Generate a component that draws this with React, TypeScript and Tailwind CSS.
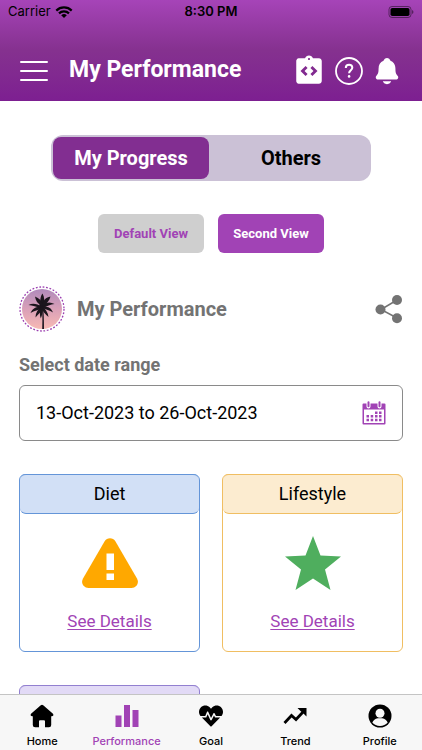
import { useState } from 'react';
import { FaHeartbeat } from 'react-icons/fa';
import { IoNotifications } from 'react-icons/io5';
import { MdIntegrationInstructions } from 'react-icons/md';

function StatusBar() {
  return (
    <div className="grid grid-cols-3 items-center h-6 px-2 font-[Inter,sans-serif] text-[13px] text-black">
      <div className="flex items-center gap-1">
        <span>Carrier</span>
        <svg className="w-[18px] h-3" viewBox="0 0 18 12" fill="none" stroke="currentColor" strokeWidth="2.2">
          <path d="M1.3 4.6a11 11 0 0 1 15.4 0" />
          <path d="M4 7.4a7.2 7.2 0 0 1 10 0" />
          <path d="M9 12 6.2 9.3a4 4 0 0 1 5.6 0z" fill="currentColor" stroke="none" />
        </svg>
      </div>
      <span className="text-center font-semibold">8:30 PM</span>
      <svg className="justify-self-end w-7 h-3" viewBox="0 0 28 12">
        <rect x="3" y="0.5" width="22" height="11" rx="3" fill="none" stroke="#000" strokeOpacity="0.45" />
        <rect x="4.5" y="2" width="19" height="8" rx="1.8" />
        <path d="M26 4v4q1.5-.6 1.5-2T26 4z" fillOpacity="0.45" />
      </svg>
    </div>
  );
}

function Header() {
  return (
    <header className="shrink-0 bg-linear-to-b from-[#a644b8] via-[#85318f] to-[#7d1f91]">
      <StatusBar />
      <div className="flex items-center h-[77px] px-5 pt-4 text-white">
        <button aria-label="Menu">
          <svg className="w-7 h-6" viewBox="0 0 28 24" fill="none" stroke="currentColor" strokeWidth="2" strokeLinecap="round">
            <path d="M1 3h26M1 12h26M1 21h26" />
          </svg>
        </button>
        <h1 className="ml-[21px] text-[23px] font-bold">My Performance</h1>
        <div className="flex items-center gap-[9px] ml-auto">
          <button aria-label="Instructions">
            <MdIntegrationInstructions className="w-[34px] h-[34px]" />
          </button>
          <button aria-label="Help">
            <svg className="w-7 h-7" viewBox="0 0 28 28" fill="none" stroke="currentColor" strokeWidth="2">
              <circle cx="14" cy="14" r="13" strokeWidth="1.8" />
              <path d="M10.800 11c0-2 1.400-3.200 3.300-3.200s3.200 1.200 3.200 3c0 2.300-3.200 2.700-3.200 5.400" />
              <circle cx="14.100" cy="19.400" r="1.300" fill="currentColor" stroke="none" />
            </svg>
          </button>
          <button aria-label="Notifications">
            <IoNotifications className="w-[30px] h-[30px]" />
          </button>
        </div>
      </div>
    </header>
  );
}

function Avatar() {
  return (
    <svg className="w-[46px] h-[46px]" viewBox="0 0 46 46">
      <defs>
        <linearGradient id="sky" x1="0" y1="0" x2="0" y2="1">
          <stop offset="0" stopColor="#b08abb" />
          <stop offset="0.500" stopColor="#d9a0b8" />
          <stop offset="1" stopColor="#f7b9b4" />
        </linearGradient>
      </defs>
      <circle cx="23" cy="23" r="22" fill="none" stroke="#9b3fb0" strokeWidth="1.300" strokeDasharray="1.800 1.656" />
      <circle cx="23" cy="23" r="20" fill="url(#sky)" />
      <path d="M22.600 18c.8 7 1 14 .6 24.900h1.800c0-9-.2-17-1.200-24.900z" fill="#221a24" />
      <g fill="#1b151d">
        <circle cx="23.200" cy="20" r="3" />
        <path d="M22 20C20.500 15 21.500 10 23.500 7.500 25.500 11 25.800 15 24.500 20z" />
        <path d="M23 20c-4-2-6.500-5-7-9.500 4 1.500 7 4.500 8.500 8.500z" />
        <path d="M23 21c-5-3.500-9.500-4-13.500-2 4 .3 8 2 13 3.500z" />
        <path d="M23 20.500c-6 0-9.500 2-11.500 6.500 4-2.300 7.500-3 12-4.500z" />
        <path d="M22.500 20.500c-4 3-6 6.500-6 11 3-3.500 5.500-5.500 7.500-10z" />
        <path d="M22 21c-1.500 4-1.500 8-.2 11.500C23.300 29 24 25 24 21z" />
        <path d="M23 20c3.500 3 6 6.500 6.500 11-3.500-3-6-5.500-7.500-10z" />
        <path d="M23 20.500c6-.500 9.500 1.500 11 6-3.500-2.500-7-3-11-4.500z" />
        <path d="M23 20c4-4 8-4.500 12.500-2-4 0-7.500 2.500-12 4z" />
        <path d="M23 19c1-5 4-7.500 8.500-8.500-1 4-4 7.500-7.500 10z" />
      </g>
    </svg>
  );
}

function ShareIcon() {
  return (
    <svg className="w-7 h-[30px]" viewBox="0 0 28 30" fill="#737373" stroke="#737373" strokeWidth="1.500">
      <path d="M22 6 6 15.500l16 8.500" fill="none" />
      <g stroke="none">
        <circle cx="22" cy="6" r="5" />
        <circle cx="5.500" cy="15.500" r="5" />
        <circle cx="22" cy="24.300" r="5" />
      </g>
    </svg>
  );
}

function CalendarIcon() {
  return (
    <svg className="w-6 h-6" viewBox="0 0 24 24" fill="#a143b5">
      <path d="M1.500 2.500h21q1 0 1 1v19q0 1-1 1h-21q-1 0-1-1v-19q0-1 1-1zM2 8.500V22h20V8.500z" fillRule="evenodd" />
      <path d="M6.500 1.800v3.700M17.500 1.800v3.700" stroke="#fff" strokeWidth="4" strokeLinecap="round" />
      <path d="M6.500 1.200v4M17.500 1.200v4" stroke="#a143b5" strokeWidth="2" strokeLinecap="round" />
      <path d="M13 10.500h2.500V13H13zM17 10.500h2.500V13H17zM4.500 14H7v2.500H4.500zM8.700 14h2.500v2.500H8.700zM13 14h2.500v2.500H13zM17 14h2.500v2.500H17zM4.500 17.700H7v2.500H4.500zM8.700 17.700h2.500v2.500H8.700zM13 17.700h2.500v2.500H13zM17 17.700h2.500v2.500H17z" />
    </svg>
  );
}

function WarningIcon() {
  return (
    <svg className="w-14 h-[50px]" viewBox="0 0 56 50">
      <path d="M22.500 3.500C25-.800 31-.800 33.500 3.500L55 40.500C57.500 45 54.500 50 49.500 50H6.500C1.500 50-1.500 45 1 40.500z" fill="#ffa800" />
      <path d="M24.500 15.500h7.500v16.500h-7.500zM24.500 35.500h7.500v6.500h-7.500z" fill="#fff" />
    </svg>
  );
}

function StarIcon() {
  return (
    <svg className="w-14 h-[54px]" viewBox="0 0 56 54" fill="#4fae5e">
      <path d="M28 0 35.500 19.500 56 20.500 40 33.500 45.500 54 28 42.500 10.500 54 16 33.500 0 20.500 20.500 19.500z" />
    </svg>
  );
}

function Card({ title, icon, frame, head }: { title?: string; icon?: React.ReactNode; frame: string; head: string }) {
  return (
    <section className={`flex flex-col items-center h-[178px] border rounded-md ${frame}`}>
      <h3 className={`-mt-px w-full h-10 shrink-0 border-y rounded-md text-lg leading-[38px] text-center text-black ${frame} ${head}`}>
        {title}
      </h3>
      {icon && (
        <>
          <div className="flex items-center h-[54px] mt-[22px]">{icon}</div>
          <a href="#details" className="mt-[19px] text-[17px] leading-6 text-[#a143b5] underline underline-offset-2">
            See Details
          </a>
        </>
      )}
    </section>
  );
}

const navItems = [
  {
    label: 'Home',
    icon: (
      <svg className="w-6 h-6" viewBox="0 0 24 24" fill="currentColor">
        <path d="M10.800 1.200q1.200-1 2.400 0l9.500 8.300q1 1 .6 1.900-.4.800-1.600.8h-.5V21q0 2.300-2.300 2.300H15v-6q0-1-1-1h-4q-1 0-1 1v6H5.100q-2.300 0-2.300-2.300v-8.800h-.5q-1.200 0-1.600-.8-.4-.900.6-1.900z" />
      </svg>
    ),
  },
  {
    label: 'Performance',
    icon: (
      <svg className="w-6 h-6" viewBox="0 0 24 24" fill="currentColor">
        <path d="M.5 11.500h6V23h-6zM9 1h6v22H9zM17.500 6h6v17h-6z" />
      </svg>
    ),
  },
  { label: 'Goal', icon: <FaHeartbeat className="w-6 h-6" /> },
  {
    label: 'Trend',
    icon: (
      <svg className="w-6 h-6" viewBox="0 0 24 24" fill="none" stroke="currentColor" strokeWidth="2.800">
        <path d="M1.500 19 8.500 11.500l4.500 4 7.500-8" />
        <path d="M14.500 4H23.500v8.500l-3-3-3-2.500z" fill="currentColor" stroke="none" />
      </svg>
    ),
  },
  {
    label: 'Profile',
    icon: (
      <svg className="w-6 h-6" viewBox="0 0 24 24">
        <circle cx="12" cy="12" r="11.500" fill="currentColor" />
        <circle cx="12" cy="9.200" r="4.500" fill="#f7f7f7" />
        <path d="M4.300 18.500q1.500-3.500 5.500-4.300h4.400q4 .8 5.500 4.300-2.900 3.400-7.700 3.400t-7.700-3.400z" fill="#f7f7f7" />
      </svg>
    ),
  },
];

export default function App() {
  const [tab, setTab] = useState('My Progress');
  const [range, setRange] = useState('13-Oct-2023 to 26-Oct-2023');

  return (
    <div className="flex flex-col h-screen bg-white font-[Roboto,sans-serif]">
      <Header />

      <main className="flex-1 min-h-0 overflow-y-auto [scrollbar-width:none] px-[19px] pt-[34px]">
        {/* Tabs */}
        <div className="grid grid-cols-2 gap-1 h-[46px] mx-8 p-0.5 rounded-xl bg-[#cbc1d6] text-xl font-bold">
          {['My Progress', 'Others'].map((name) => (
            <button
              key={name}
              onClick={() => setTab(name)}
              className={`rounded-lg ${tab === name ? 'bg-[#822e91] text-white' : 'text-black'}`}
            >
              {name}
            </button>
          ))}
        </div>

        {/* View switch */}
        <div className="flex justify-center gap-[14px] mt-[33px] text-[13px] font-bold">
          <button className="w-[106px] h-[39px] rounded-md bg-[#cfcfcf] text-[#a143b5]">Default View</button>
          <button className="w-[106px] h-[39px] rounded-md bg-[#a143b5] text-white">Second View</button>
        </div>

        <div className="flex items-center h-[46px] mt-[33px]">
          <Avatar />
          <h2 className="ml-3 text-xl font-bold text-[#737373]">My Performance</h2>
          <button aria-label="Share" className="ml-auto">
            <ShareIcon />
          </button>
        </div>

        {/* Date range */}
        <label htmlFor="range" className="block mt-[21px] text-lg leading-6 font-bold text-[#737373]">
          Select date range
        </label>
        <div className="flex items-center h-14 mt-2 pl-4 pr-4 border border-[#8a8a8a] rounded-md">
          <input
            id="range"
            value={range}
            onChange={(e) => setRange(e.target.value)}
            className="flex-1 min-w-0 text-lg text-black outline-none"
          />
          <button aria-label="Open calendar">
            <CalendarIcon />
          </button>
        </div>

        {/* Cards */}
        <div className="grid grid-cols-2 gap-x-[22px] gap-y-[33px] mt-[33px] pb-8">
          <Card title="Diet" icon={<WarningIcon />} frame="border-[#6495d8]" head="bg-[#d2e0f6]" />
          <Card title="Lifestyle" icon={<StarIcon />} frame="border-[#f0be62]" head="bg-[#fcecd0]" />
          <Card frame="border-[#927fd0]" head="bg-[#e2daf6]" />
        </div>
      </main>

      <nav className="grid grid-cols-5 shrink-0 h-14 border-t border-[#c4c4c4] bg-[#f7f7f7] font-[Inter,sans-serif] text-[11px] font-medium">
        {navItems.map(({ label, icon }) => (
          <a
            key={label}
            href={`#${label}`}
            className={`flex flex-col items-center gap-[5px] pt-[9px] ${label === 'Performance' ? 'text-[#a143b5]' : 'text-black'}`}
          >
            {icon}
            <span className="leading-4">{label}</span>
          </a>
        ))}
      </nav>
    </div>
  );
}
